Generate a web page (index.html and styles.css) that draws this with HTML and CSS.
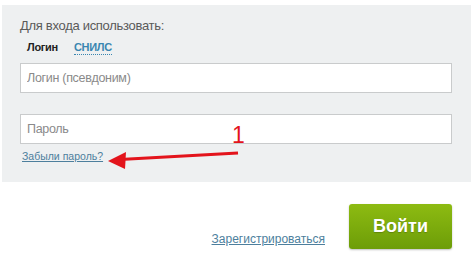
FILE: index.html
```html
<!DOCTYPE html>
<html>
<head>
  <title>Вход</title>
  <link rel="stylesheet" href="styles.css">
</head>
<body>
  <div class="panel">
    <p class="caption">Для входа использовать:</p>
    <div class="tabs">
      <span class="tab active">Логин</span>
      <span class="tab">СНИЛС</span>
    </div>
    <input class="field" type="text" placeholder="Логин (псевдоним)">
    <input class="field second" type="password" placeholder="Пароль">
    <a class="forgot" href="#">Забыли пароль?</a>
  </div>

  <div class="actions">
    <a class="register" href="#">Зарегистрироваться</a>
    <button class="enter">Войти</button>
  </div>

  <!-- red annotation drawn over the form -->
  <svg class="mark" width="474" height="254" viewBox="0 0 474 254">
    <line x1="238" y1="153" x2="120" y2="159.5" stroke="#e3141c" stroke-width="3"/>
    <polygon points="108,161 126,152 125,169" fill="#e3141c"/>
    <text x="232" y="143" fill="#e3141c" font-size="23" font-family="Liberation Sans, Arial, sans-serif">1</text>
  </svg>
</body>
</html>
```

FILE: styles.css
```css
body {
  margin: 0;
  font-family: "Liberation Sans", Arial, sans-serif;
  background-color: #fff;
  position: relative;
  width: 474px;
  height: 254px;
  overflow: hidden;
}

.panel {
  background-color: #eef0f1;
  margin: 5px 3px 0 2px;
  padding: 13px 19px 0 18px;
  height: 164px;
  display: flex;
  flex-direction: column;
}

.caption {
  margin: 0;
  font-size: 13px;
  line-height: 15px;
  letter-spacing: -0.3px;
  color: #5a5a5a;
}

.tabs {
  display: flex;
  gap: 16px;
  margin: 8px 0 0 7px;
  font-size: 11px;
  line-height: 13px;
  letter-spacing: -0.3px;
  font-weight: bold;
}

.tab {
  color: #3a86b0;
  border-bottom: 1px dotted #3a86b0;
}

.tab.active {
  color: #222;
  border-bottom: none;
}

.field {
  box-sizing: border-box;
  width: 432px;
  height: 30px;
  margin-top: 8px;
  padding: 0 6px;
  border: 1px solid #c9cbcc;
  background-color: #fff;
  font-family: "Liberation Sans", Arial, sans-serif;
  font-size: 12.5px;
  letter-spacing: -0.3px;
  color: #333;
  outline: none;
}

.field::placeholder {
  color: #8a8a8a;
}

.field.second {
  margin-top: 21px;
}

.forgot {
  margin: 5px 0 0 2px;
  align-self: flex-start;
  font-size: 10.5px;
  line-height: 14px;
  color: #4d7f9d;
}

.actions {
  display: flex;
  justify-content: flex-end;
  align-items: flex-end;
  gap: 24px;
  padding: 22px 22px 0 0;
}

.register {
  font-size: 12px;
  line-height: 14px;
  color: #4d7f9d;
  margin-bottom: 3px;
}

.enter {
  width: 103px;
  height: 45px;
  border: none;
  border-radius: 3px;
  background: linear-gradient(#8dbb12, #6d9d08);
  box-shadow: 0 1px 2px rgba(0, 0, 0, 0.25);
  color: #fff;
  font-family: "Liberation Sans", Arial, sans-serif;
  font-size: 18px;
  font-weight: bold;
  text-shadow: 0 1px 1px rgba(0, 0, 0, 0.2);
  cursor: pointer;
}

.mark {
  position: absolute;
  left: 0;
  top: 0;
  pointer-events: none;
}
```
